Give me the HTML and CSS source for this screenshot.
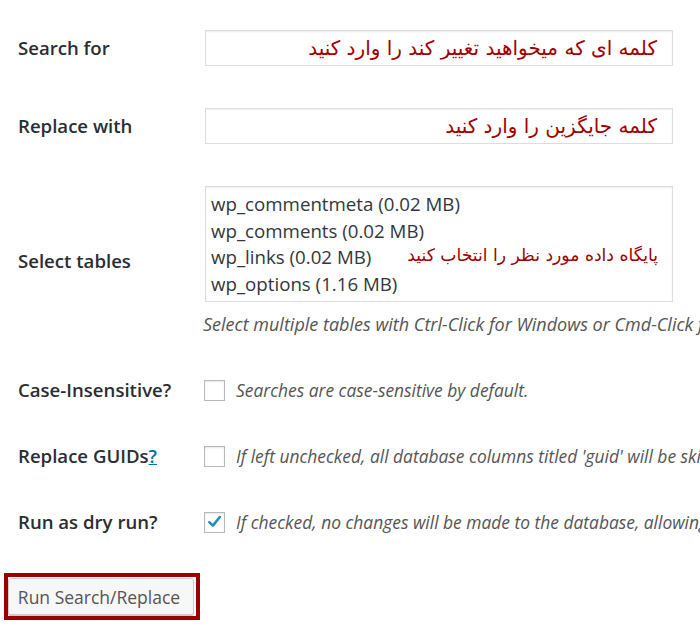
FILE: index.html
```html
<!DOCTYPE html>
<html>
<head>
<meta charset="utf-8">
<link rel="stylesheet" href="styles.css">
</head>
<body>
<div class="form">
  <div class="row">
    <div class="label">Search for</div>
    <div class="field"><div class="input"><span class="fa">کلمه ای که میخواهید تغییر کند را وارد کنید</span></div></div>
  </div>
  <div class="row">
    <div class="label">Replace with</div>
    <div class="field"><div class="input"><span class="fa">کلمه جایگزین را وارد کنید</span></div></div>
  </div>
  <div class="row">
    <div class="label">Select tables</div>
    <div class="field">
      <div class="select">
        <div class="opt">wp_commentmeta (0.02 MB)</div>
        <div class="opt">wp_comments (0.02 MB)</div>
        <div class="opt">wp_links (0.02 MB)</div>
        <div class="opt">wp_options (1.16 MB)</div>
        <span class="fa note">پایگاه داده مورد نظر را انتخاب کنید</span>
      </div>
      <div class="desc below">Select multiple tables with Ctrl-Click for Windows or Cmd-Click for Mac.</div>
    </div>
  </div>
  <div class="row">
    <div class="label">Case-Insensitive?</div>
    <div class="field check"><span class="box"></span><span class="desc">Searches are case-sensitive by default.</span></div>
  </div>
  <div class="row">
    <div class="label">Replace GUIDs<a class="help" href="#">?</a></div>
    <div class="field check"><span class="box"></span><span class="desc">If left unchecked, all database columns titled 'guid' will be skipped.</span></div>
  </div>
  <div class="row">
    <div class="label">Run as dry run?</div>
    <div class="field check"><span class="box"><svg width="20" height="20" viewBox="0 0 20 20"><path d="M4.5 10.2 L8.3 13.8 L15.6 4.8" fill="none" stroke="#1e8cbe" stroke-width="2.6" stroke-linecap="round" stroke-linejoin="round"/></svg></span><span class="desc">If checked, no changes will be made to the database, allowing you to check the results beforehand.</span></div>
  </div>
</div>
<div class="submit">
  <div class="mark"><button class="btn">Run Search/Replace</button></div>
</div>
</body>
</html>
```
FILE: styles.css
```css
html, body {
  margin: 0;
  padding: 0;
  background: #fff;
  overflow: hidden;
}
body {
  width: 700px;
  height: 624px;
  font-family: "Open Sans", "Liberation Sans", sans-serif;
  color: #23282d;
}
.form {
  padding-top: 9px;
  padding-left: 18px;
}
.row {
  display: flex;
  align-items: center;
  padding: 21px 0;
}
.label {
  width: 187px;
  flex: none;
  font-size: 18.6px;
  font-weight: 600;
  line-height: 24px;
  white-space: nowrap;
  color: #2a2e33;
}
.help {
  color: #0073aa;
  text-decoration: underline;
}
.field {
  flex: none;
  width: 500px;
}
.input {
  box-sizing: border-box;
  width: 468px;
  height: 36px;
  border: 1px solid #ddd;
  box-shadow: inset 0 1px 2px rgba(0,0,0,0.07);
  display: flex;
  align-items: center;
  justify-content: flex-end;
  padding-right: 15px;
}
.fa {
  font-family: "DejaVu Sans", "Noto Sans", sans-serif;
  direction: rtl;
  color: #a00000;
  font-size: 20px;
  white-space: nowrap;
}
.select {
  position: relative;
  box-sizing: border-box;
  width: 468px;
  height: 116px;
  border: 1px solid #ddd;
  box-shadow: inset 0 1px 2px rgba(0,0,0,0.07);
  padding: 4px 5px;
  font-size: 18.7px;
  color: #32373c;
}
.opt {
  line-height: 26.5px;
  white-space: nowrap;
}
.select .note {
  position: absolute;
  right: 14px;
  top: 58px;
  font-size: 17.2px;
}
.desc {
  font-style: italic;
  font-size: 17.4px;
  color: #555;
  line-height: 24px;
  white-space: nowrap;
}
.below {
  display: block;
  margin-top: 10px;
  margin-left: -2px;
  font-size: 18px;
}
.check {
  display: flex;
  align-items: center;
  gap: 11px;
  margin-left: -1px;
}
.box {
  box-sizing: border-box;
  width: 21px;
  height: 21px;
  flex: none;
  border: 1px solid #b4b9be;
  box-shadow: inset 0 1px 2px rgba(0,0,0,0.1);
  display: flex;
  align-items: center;
  justify-content: center;
}
.submit {
  padding-top: 18px;
  padding-left: 4px;
}
.mark {
  display: inline-block;
  border: 4px solid #9b0000;
  padding: 1px 2px 1px 0;
}
.btn {
  display: block;
  box-sizing: border-box;
  width: 186px;
  height: 37px;
  margin: 0;
  border: 1px solid #ccc;
  border-radius: 3px;
  background: #f7f7f7;
  box-shadow: 0 1px 0 #ccc;
  font-family: "Open Sans", "Liberation Sans", sans-serif;
  font-size: 17.5px;
  color: #555;
  padding: 0 12px 0 8px;
}
```
